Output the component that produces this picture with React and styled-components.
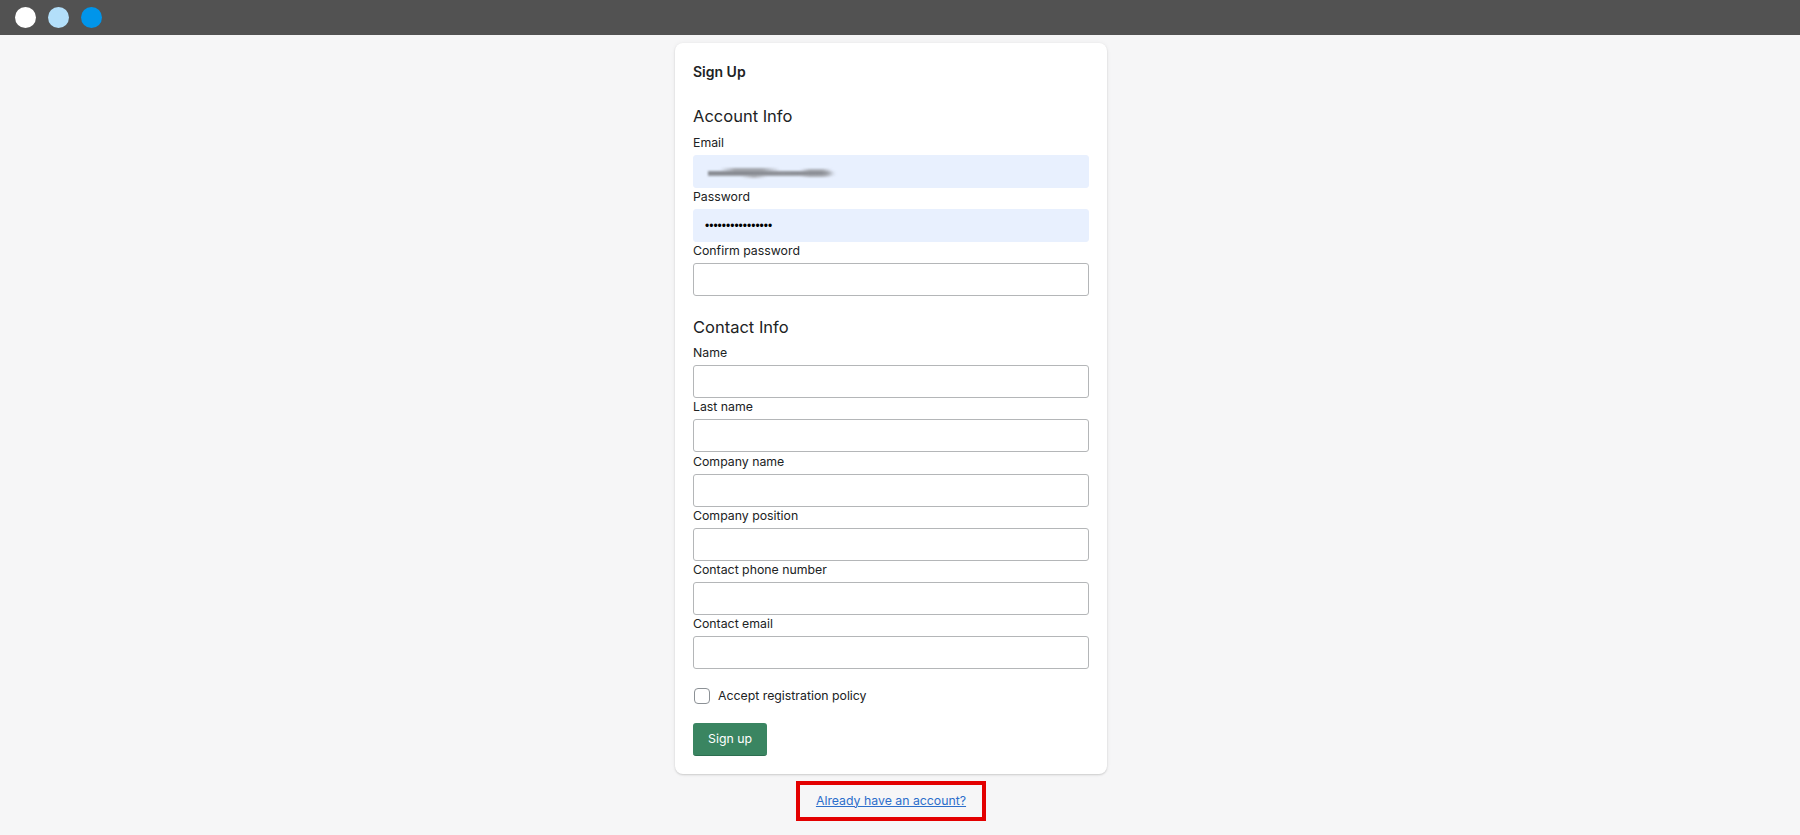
import React from 'react';
import styled, { createGlobalStyle } from 'styled-components';

const Global = createGlobalStyle`
  html, body {
    margin: 0;
    padding: 0;
    height: 100%;
    background: #f6f6f7;
  }
  body {
    font-family: Inter, "Liberation Sans", sans-serif;
    color: #202223;
  }
`;

const Page = styled.div`
  height: 835px;
  overflow: hidden;
  display: flex;
  flex-direction: column;
`;

const TopBar = styled.div`
  height: 35px;
  background: #525252;
  display: flex;
  align-items: center;
  gap: 12px;
  padding-left: 15px;
  flex-shrink: 0;
`;

const Dot = styled.span`
  width: 21px;
  height: 21px;
  border-radius: 50%;
  background: ${p => p.color};
`;

const Main = styled.div`
  display: flex;
  flex-direction: column;
  align-items: center;
  padding: 8px 18px 0 0;
`;

const Card = styled.form`
  box-sizing: border-box;
  width: 432px;
  height: 731px;
  background: #fff;
  border-radius: 8px;
  box-shadow: 0 0 5px rgba(23, 24, 24, 0.05), 0 1px 2px rgba(0, 0, 0, 0.15);
  padding: 19px 18px 0;
`;

const Title = styled.h2`
  margin: 0;
  font-size: 14px;
  font-weight: 600;
  line-height: 19px;
`;

const SectionTitle = styled.h3`
  margin: ${p => p.$top}px 0 ${p => p.$bottom}px;
  font-size: 16.5px;
  font-weight: 400;
  line-height: 24px;
`;

const Field = styled.div`
  height: 54.2px;
  display: flex;
  flex-direction: column;
`;

const Label = styled.label`
  font-size: 12.3px;
  line-height: 16px;
  margin-bottom: 4px;
  flex-shrink: 0;
  color: #202223;
`;

const Input = styled.input`
  box-sizing: border-box;
  display: block;
  width: 396px;
  height: 33px;
  padding: 0 11px;
  border-radius: 3px;
  font-family: "Liberation Sans", sans-serif;
  font-size: 12px;
  color: #000;
  outline: none;
  border: 1px solid ${p => (p.$filled ? '#e8f0fe' : '#b4b6b8')};
  background: ${p => (p.$filled ? '#e8f0fe' : '#fff')};
`;

// blurred out address
const Smudge = styled.span`
  position: absolute;
  left: 15px;
  top: 13px;
  width: 130px;
  height: 10px;
  filter: blur(1px);
  background:
    linear-gradient(90deg, transparent, #a3a6ad 25%, #a3a6ad 70%, transparent) 12px 0 / 60px 3px no-repeat,
    linear-gradient(90deg, #84878e, #7f8289 30%, #8b8e95 60%, #7f8289 90%, transparent) 0 4px / 125px 2px no-repeat,
    linear-gradient(90deg, #94979e, #9a9da4 70%, #a5a8af 90%, transparent) 0 3px / 128px 5px no-repeat,
    linear-gradient(90deg, transparent, #a9acb3 30%, #a9acb3 70%, transparent) 92px 1px / 32px 8px no-repeat,
    linear-gradient(90deg, transparent, #b3b6bd 50%, transparent) 33px 8px / 26px 2px no-repeat;
`;

const InputWrap = styled.div`
  position: relative;
`;

const CheckRow = styled.label`
  display: flex;
  align-items: center;
  margin-top: 15.6px;
  padding-left: 1px;
  height: 20px;
  gap: 8px;
  font-size: 12.3px;
  color: #202223;
`;

const Box = styled.input`
  appearance: none;
  box-sizing: border-box;
  width: 16px;
  height: 16px;
  margin: 0;
  background: #fff;
  border: 1px solid #8c9196;
  border-radius: 4px;
`;

const Submit = styled.button`
  display: block;
  box-sizing: border-box;
  width: 74px;
  height: 33px;
  margin-top: 17px;
  padding: 0;
  border: 0;
  border-bottom: 1px solid #2c6e50;
  border-radius: 3px;
  background: #3a8561;
  color: #fff;
  font-family: inherit;
  font-size: 12.3px;
`;

const LinkBox = styled.div`
  box-sizing: border-box;
  width: 190px;
  height: 40px;
  margin-top: 7px;
  padding-bottom: 2px;
  border: 4px solid #e30000;
  display: flex;
  align-items: center;
  justify-content: center;
`;

const Link = styled.a`
  color: #2c6ecb;
  font-size: 12.3px;
  text-decoration: underline;
`;

const account = [
  { label: 'Email', filled: true, smudge: true },
  { label: 'Password', filled: true, value: '••••••••••••••••' },
  { label: 'Confirm password' },
];

const contact = ['Name', 'Last name', 'Company name', 'Company position', 'Contact phone number', 'Contact email'];

export default function App() {
  return (
    <Page>
      <Global />
      <TopBar>
        <Dot color="#ffffff" />
        <Dot color="#b3dffa" />
        <Dot color="#0095ea" />
      </TopBar>
      <Main>
        <Card onSubmit={e => e.preventDefault()}>
          <Title>Sign Up</Title>
          <SectionTitle $top={23} $bottom={7}>Account Info</SectionTitle>
          {account.map(f => (
            <Field key={f.label}>
              <Label>{f.label}</Label>
              <InputWrap>
                <Input $filled={f.filled} type="text" readOnly value={f.value || ''} />
                {f.smudge && <Smudge />}
              </InputWrap>
            </Field>
          ))}
          <SectionTitle $top={17.6} $bottom={6}>Contact Info</SectionTitle>
          {contact.map(label => (
            <Field key={label}>
              <Label>{label}</Label>
              <Input readOnly />
            </Field>
          ))}
          <CheckRow>
            <Box type="checkbox" />
            Accept registration policy
          </CheckRow>
          <Submit>Sign up</Submit>
        </Card>
        <LinkBox>
          <Link href="#">Already have an account?</Link>
        </LinkBox>
      </Main>
    </Page>
  );
}
